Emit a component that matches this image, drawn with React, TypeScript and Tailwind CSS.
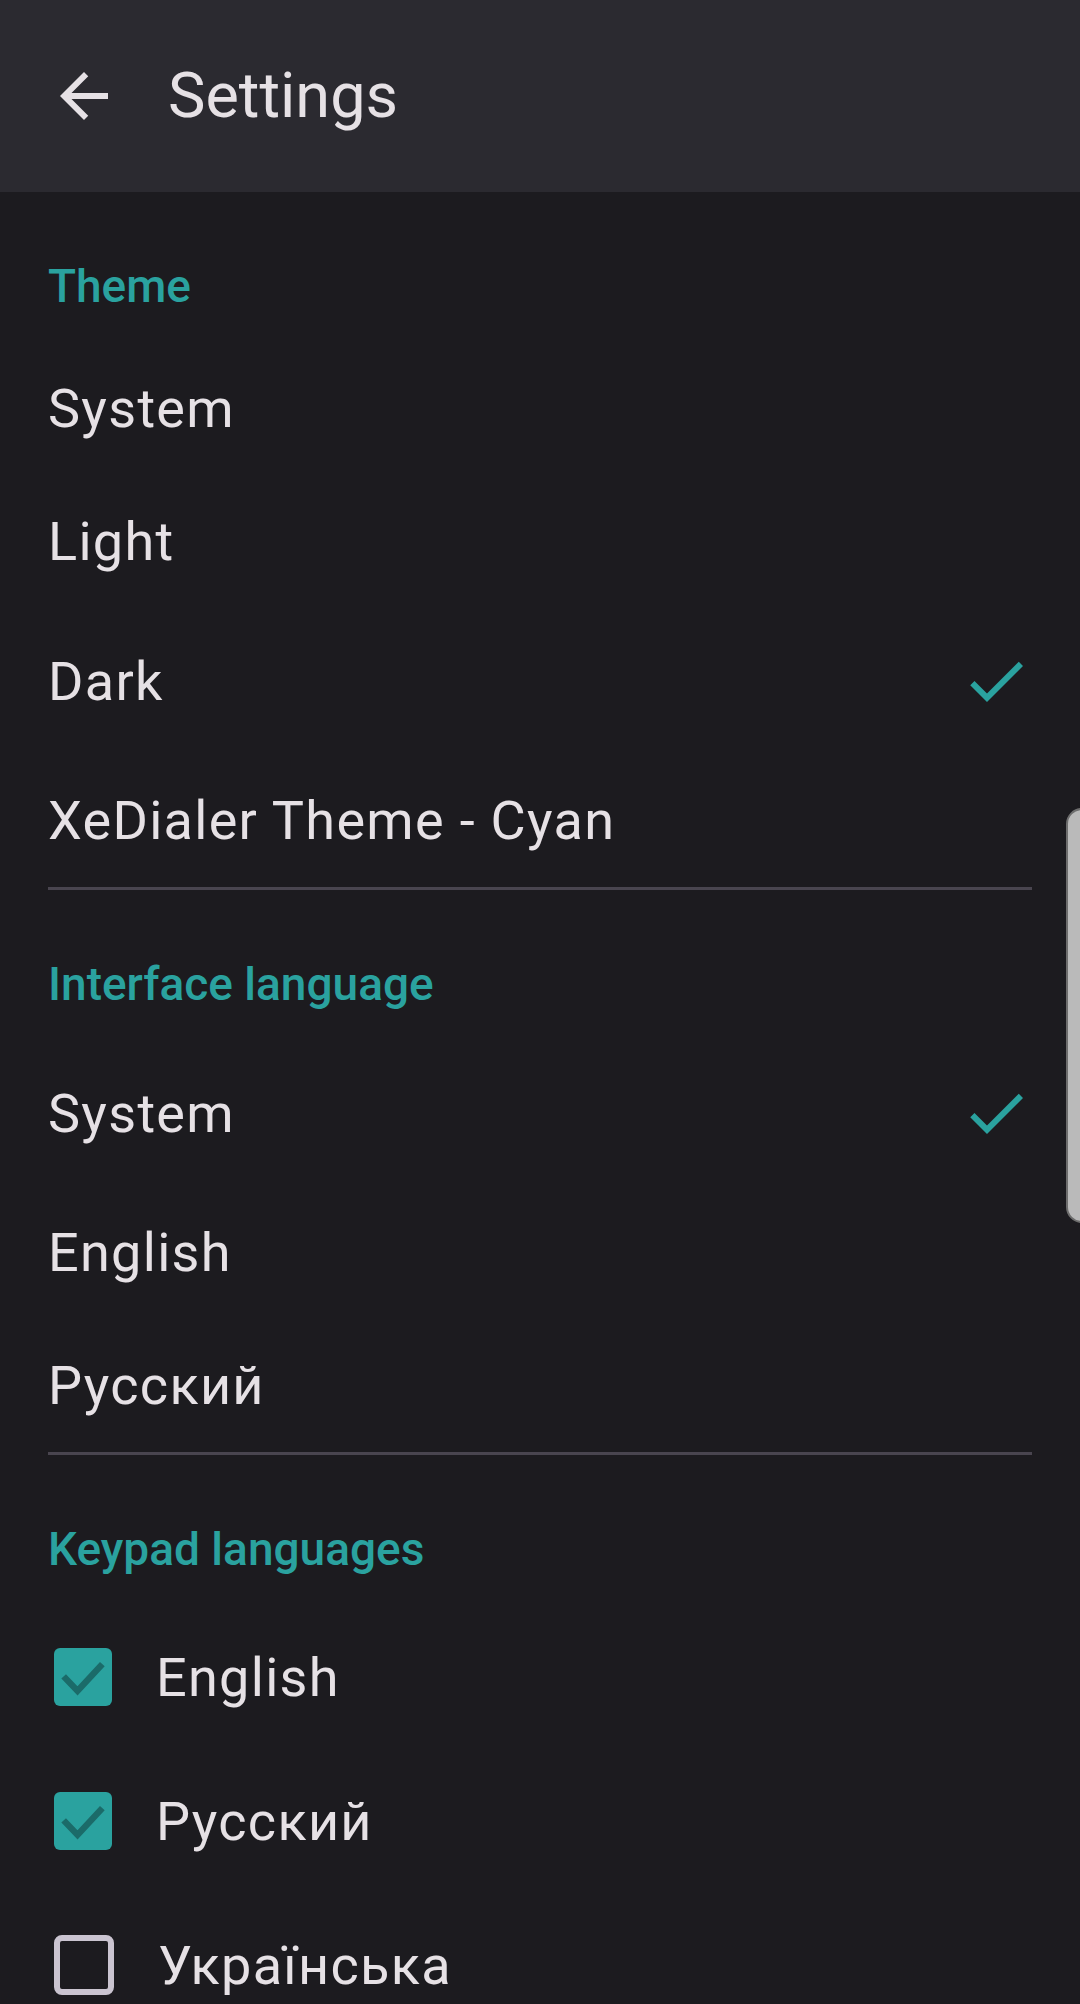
import React from 'react'

const teal = 'text-[#2aa29f]'

function CheckIcon() {
  return (
    <svg viewBox="0 0 24 24" className="w-[72px] h-[72px] fill-[#2aa29f]">
      <path d="M9 16.17L4.83 12l-1.42 1.41L9 19 21 7l-1.41-1.41z" />
    </svg>
  )
}

function SectionTitle({ children }: { children: React.ReactNode }) {
  return (
    <div className={`px-[48px] pt-[66px] pb-[28px] text-[46px] leading-[56px] font-medium ${teal}`}>
      {children}
    </div>
  )
}

function Option({ label, selected }: { label: string; selected?: boolean }) {
  return (
    <div
      className={`flex items-center justify-between px-[48px] text-[54px] tracking-[1.3px] text-[#e6e1e5] ${
        selected ? 'h-[146px]' : 'h-[133px]'
      }`}
    >
      <span>{label}</span>
      {selected && <CheckIcon />}
    </div>
  )
}

function Divider() {
  return <div className="mx-[48px] h-[3px] bg-[#49454f]" />
}

function CheckRow({ label, checked }: { label: string; checked?: boolean }) {
  return (
    <div className="flex items-center h-[144px] pl-[54px] text-[54px] tracking-[1.3px] text-[#e6e1e5]">
      {checked ? (
        <div className="w-[58px] h-[58px] rounded-[6px] bg-[#2aa29f] flex items-center justify-center">
          <svg viewBox="0 0 18 18" className="w-[58px] h-[58px]">
            <path d="M3 8.8l4.3 4.5L15 5" fill="none" stroke="#1b6b69" strokeWidth="2" />
          </svg>
        </div>
      ) : (
        <div className="w-[60px] h-[60px] rounded-[8px] border-[6px] border-[#cac4d0]" />
      )}
      <span className="ml-[44px]">{label}</span>
    </div>
  )
}

export default function App() {
  return (
    <div
      className="relative w-[1080px] h-[2004px] overflow-hidden bg-[#1c1b1f]"
      style={{ fontFamily: 'Roboto, "Noto Sans", sans-serif' }}
    >
      {/* Top bar */}
      <header className="h-[192px] bg-[#2b2a30] flex items-center pl-[48px]">
        <svg viewBox="0 0 24 24" className="w-[72px] h-[72px] fill-[#e6e1e5]">
          <path d="M20 11H7.83l5.59-5.59L12 4l-8 8 8 8 1.41-1.41L7.83 13H20v-2z" />
        </svg>
        <h1 className="ml-[48px] text-[63px] text-[#e6e1e5]">Settings</h1>
      </header>

      <SectionTitle>Theme</SectionTitle>
      <Option label="System" />
      <Option label="Light" />
      <Option label="Dark" selected />
      <Option label="XeDialer Theme - Cyan" />
      <Divider />

      <SectionTitle>Interface language</SectionTitle>
      <Option label="System" selected />
      <Option label="English" />
      <Option label="Русский" />
      <Divider />

      <SectionTitle>Keypad languages</SectionTitle>
      <div>
        <CheckRow label="English" checked />
        <CheckRow label="Русский" checked />
        <CheckRow label="Українська" />
      </div>

      {/* scroll indicator */}
      <div className="absolute left-[1066px] top-[808px] w-[24px] h-[415px] rounded-l-[16px] bg-[#bababa] border-2 border-[#6e6e6e]" />
    </div>
  )
}
